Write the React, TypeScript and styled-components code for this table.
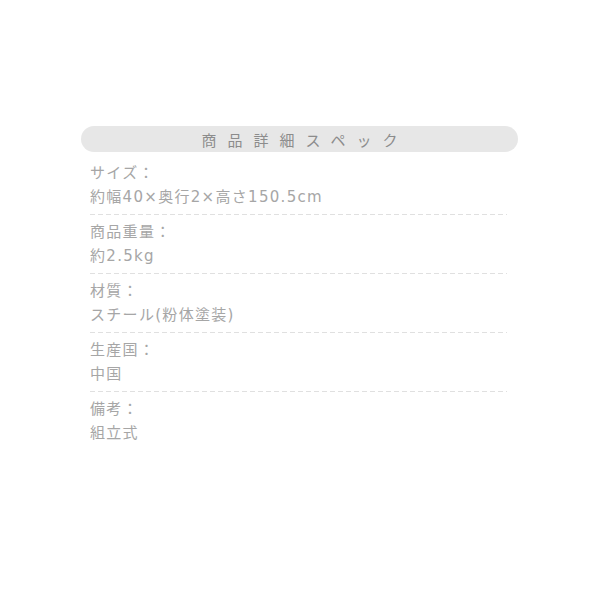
import React from 'react';
import styled, { createGlobalStyle } from 'styled-components';

const GlobalStyle = createGlobalStyle`
  html, body {
    margin: 0;
    padding: 0;
    background: #ffffff;
  }
  body {
    font-family: "DejaVu Sans", "Noto Sans CJK JP", sans-serif;
  }
`;

const Page = styled.div`
  width: 600px;
  height: 600px;
  padding: 126px 0 0 81px;
  box-sizing: border-box;
`;

const Spec = styled.section`
  width: 437px;
`;

const Heading = styled.h2`
  margin: 0;
  height: 26px;
  border-radius: 13px;
  background: #e7e7e7;
  display: flex;
  align-items: center;
  justify-content: center;
  padding-left: 11px;
  font-size: 15px;
  font-weight: 400;
  letter-spacing: 11px;
  color: #8c8c8c;
  font-family: "Noto Sans CJK JP", sans-serif;
`;

const List = styled.dl`
  margin: 9px 0 0;
  padding: 0 11px 0 9px;
`;

const Row = styled.div<{ $first?: boolean; $last?: boolean }>`
  padding: ${(p) => (p.$first ? '0' : '5px')} 0 6px;
  background: ${(p) =>
    p.$last
      ? 'none'
      : 'repeating-linear-gradient(to right, #e0e0e0 0 5px, transparent 5px 8px) left bottom / 100% 1px no-repeat'};
`;

const Label = styled.dt`
  margin: 0;
  font-size: 15px;
  line-height: 24px;
  letter-spacing: 1.3px;
  color: #a6a6a6;
`;

const Value = styled.dd`
  margin: 0;
  font-size: 15px;
  line-height: 24px;
  letter-spacing: 1.3px;
  color: #a6a6a6;
`;

const specs = [
  { label: 'サイズ：', value: '約幅40×奥行2×高さ150.5cm' },
  { label: '商品重量：', value: '約2.5kg' },
  { label: '材質：', value: 'スチール(粉体塗装)' },
  { label: '生産国：', value: '中国' },
  { label: '備考：', value: '組立式' },
];

export default function App() {
  return (
    <>
      <GlobalStyle />
      <Page>
        <Spec>
          <Heading>商品詳細スペック</Heading>
          <List>
            {specs.map((s, i) => (
              <Row key={s.label} $first={i === 0} $last={i === specs.length - 1}>
                <Label>{s.label}</Label>
                <Value>{s.value}</Value>
              </Row>
            ))}
          </List>
        </Spec>
      </Page>
    </>
  );
}
